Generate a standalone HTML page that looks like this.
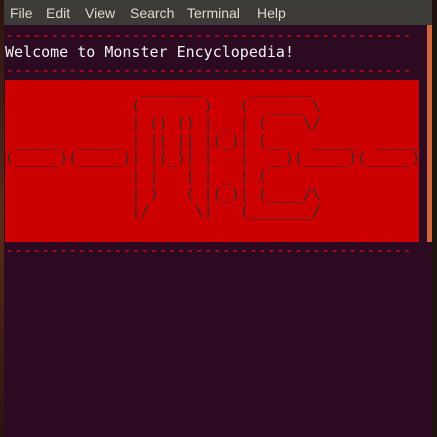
<!DOCTYPE html>
<html><head><meta charset="utf-8"><style>
html,body{margin:0;padding:0;width:437px;height:437px;overflow:hidden;background:linear-gradient(90deg,#3a1a10 0,#6a3020 2px,#3a1a10 4px);position:relative}
.desk{position:absolute;left:0;top:0;width:437px;height:437px;background:linear-gradient(180deg,#2a1410,#5a2a18 50%,#2a1410);}
.rdesk{position:absolute;left:432px;top:0;width:5px;height:437px;background:#1e120c}
.term{position:absolute;left:4px;top:0;width:428px;height:437px;background:#2c0a22}
.menu{position:absolute;left:4px;top:0;width:428px;height:25px;background:#3c3b37;color:#dfdbd2;font:14px "Liberation Sans",sans-serif;}
.menu span{position:absolute;top:5px}
.sb{position:absolute;left:427px;top:25px;width:5px;height:217px;background:#d0663e}
pre{margin:0;position:absolute;left:5px;font-family:"DejaVu Sans Mono","Liberation Mono",monospace;font-size:15px;line-height:17.6px;white-space:pre}
.d{color:#e01010}
.w{color:#f2f2f2}
.box{position:absolute;left:5px;top:80px;width:414px;height:162px;background:#cc0000}
.art{color:#3a2a2a;top:80px}
</style></head><body>
<div class="desk"></div><div class="rdesk"></div>
<div class="term"></div>
<div class="menu"><span style="left:6px">File</span><span style="left:42px">Edit</span><span style="left:81px">View</span><span style="left:126px">Search</span><span style="left:183px">Terminal</span><span style="left:253px">Help</span></div>
<div class="sb"></div>
<pre class="d" style="top:27px">---------------------------------------------</pre>
<pre class="w" style="top:44px">Welcome to Monster Encyclopedia!</pre>
<pre class="d" style="top:62px">---------------------------------------------</pre>
<div class="box"></div>
<pre class="art">               _______     _______
              (       )   (  ____ \
              | () () | _ | (    \/
 _____  _____ | || || |(_)| (__   _____  _____
(_____)(_____)| |(_)| |   |  __)(_____)(_____)
              | |   | | _ | (
              | )   ( |(_)| (____/\
              |/     \|   (_______/</pre>
<pre class="d" style="top:242px">---------------------------------------------</pre>
</body></html>
